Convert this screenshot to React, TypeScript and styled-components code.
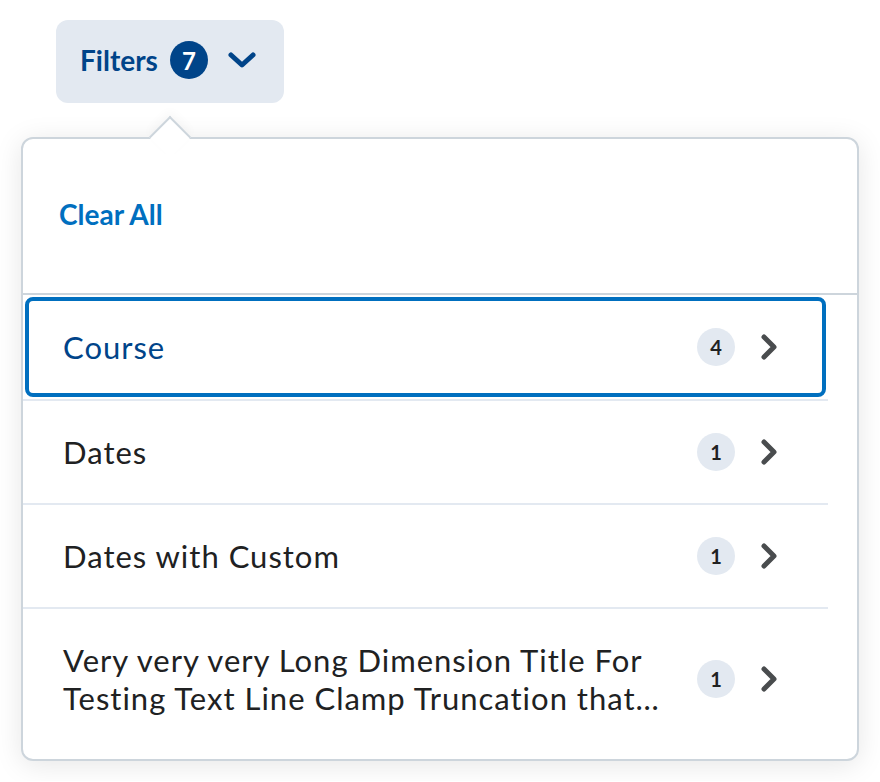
import React from 'react';
import styled, { createGlobalStyle } from 'styled-components';

const GlobalStyle = createGlobalStyle`
  body {
    margin: 0;
    background: #ffffff;
    font-family: Lato, "Noto Sans", sans-serif;
  }
`;

const filters = [
  { title: 'Course', count: 4, focused: true },
  { title: 'Dates', count: 1 },
  { title: 'Dates with Custom', count: 1 },
  { title: 'Very very very Long Dimension Title For Testing Text Line Clamp Truncation that…', count: 1 },
];

const App: React.FC = () => {
  return (
    <>
      <GlobalStyle />
      <Page>
        <Opener type="button">
          <OpenerText>Filters</OpenerText>
          <OpenerCount>7</OpenerCount>
          <svg width="28" height="16" viewBox="0 0 28 16">
            <path d="M3 3 L14 13 L25 3" fill="none" stroke="#004489" strokeWidth="5" strokeLinecap="round" strokeLinejoin="round" />
          </svg>
        </Opener>

        <Dropdown>
          <Pointer />
          <Header>
            <ClearAll type="button">Clear All</ClearAll>
          </Header>
          <List>
            {filters.map(f => (
              <Item key={f.title} $focused={f.focused}>
                <ItemTitle $focused={f.focused}>{f.title}</ItemTitle>
                <Count>{f.count}</Count>
                <svg width="18" height="28" viewBox="0 0 18 28">
                  <path d="M4 4 L14 14 L4 24" fill="none" stroke="#494c4e" strokeWidth="5" strokeLinecap="round" strokeLinejoin="round" />
                </svg>
              </Item>
            ))}
          </List>
        </Dropdown>
      </Page>
    </>
  );
};

export default App;

const Page = styled.div`
  padding: 20px 21px;
  display: flex;
  flex-direction: column;
  align-items: flex-start;
`;

const Opener = styled.button`
  margin-left: 35px;
  width: 228px;
  height: 83px;
  box-sizing: border-box;
  padding: 0 28px 3px 24px;
  border: none;
  border-radius: 12px;
  background: #e3e9f1;
  display: flex;
  align-items: center;
  font-family: Lato, sans-serif;
  cursor: pointer;
`;

const OpenerText = styled.span`
  font-size: 28px;
  font-weight: 700;
  color: #004489;
`;

const OpenerCount = styled.span`
  margin-left: 12px;
  margin-right: 20px;
  width: 38px;
  height: 38px;
  border-radius: 50%;
  background: #004489;
  color: #ffffff;
  font-size: 24px;
  font-weight: 700;
  display: flex;
  align-items: center;
  justify-content: center;
`;

const Dropdown = styled.div`
  position: relative;
  margin-top: 34px;
  width: 838px;
  box-sizing: border-box;
  border: 2px solid #cdd5dc;
  border-radius: 12px;
  background: #ffffff;
  box-shadow: 0 4px 28px rgba(0, 0, 0, 0.1);
  padding-bottom: 10px;
`;

const Pointer = styled.div`
  position: absolute;
  top: -17px;
  left: 132px;
  width: 28px;
  height: 28px;
  background: #ffffff;
  border-top: 2px solid #cdd5dc;
  border-left: 2px solid #cdd5dc;
  transform: rotate(45deg);
  box-shadow: -4px -4px 10px rgba(0, 0, 0, 0.03);
`;

const Header = styled.div`
  height: 156px;
  box-sizing: border-box;
  border-bottom: 2px solid #cdd5dc;
  padding: 0 0 5px 36px;
  display: flex;
  align-items: center;
`;

const ClearAll = styled.button`
  border: none;
  background: none;
  padding: 0;
  font-family: Lato, sans-serif;
  font-size: 28px;
  font-weight: 700;
  color: #006fbf;
  cursor: pointer;
`;

const List = styled.div`
  padding-right: 29px;
`;

const Item = styled.div<{ $focused?: boolean }>`
  position: relative;
  display: flex;
  align-items: center;
  padding: 32px 50px 32px 40px;

  &:first-child {
    padding-top: 33px;
    padding-bottom: 33px;
  }

  & + & {
    border-top: 2px solid #e3e9f1;
  }

  ${p => p.$focused && `
    &::after {
      content: '';
      position: absolute;
      inset: 2px;
      border: 4px solid #006fbf;
      border-radius: 8px;
    }
  `}
`;

const ItemTitle = styled.div<{ $focused?: boolean }>`
  flex: 1;
  font-size: 31px;
  letter-spacing: 1px;
  line-height: 38px;
  color: ${p => (p.$focused ? '#004489' : '#202122')};
  padding-right: 30px;
`;

const Count = styled.span`
  width: 38px;
  height: 38px;
  border-radius: 50%;
  background: #e3e9f1;
  color: #202122;
  font-size: 20px;
  font-weight: 700;
  display: flex;
  align-items: center;
  justify-content: center;
  margin-right: 25px;
  flex-shrink: 0;
`;
